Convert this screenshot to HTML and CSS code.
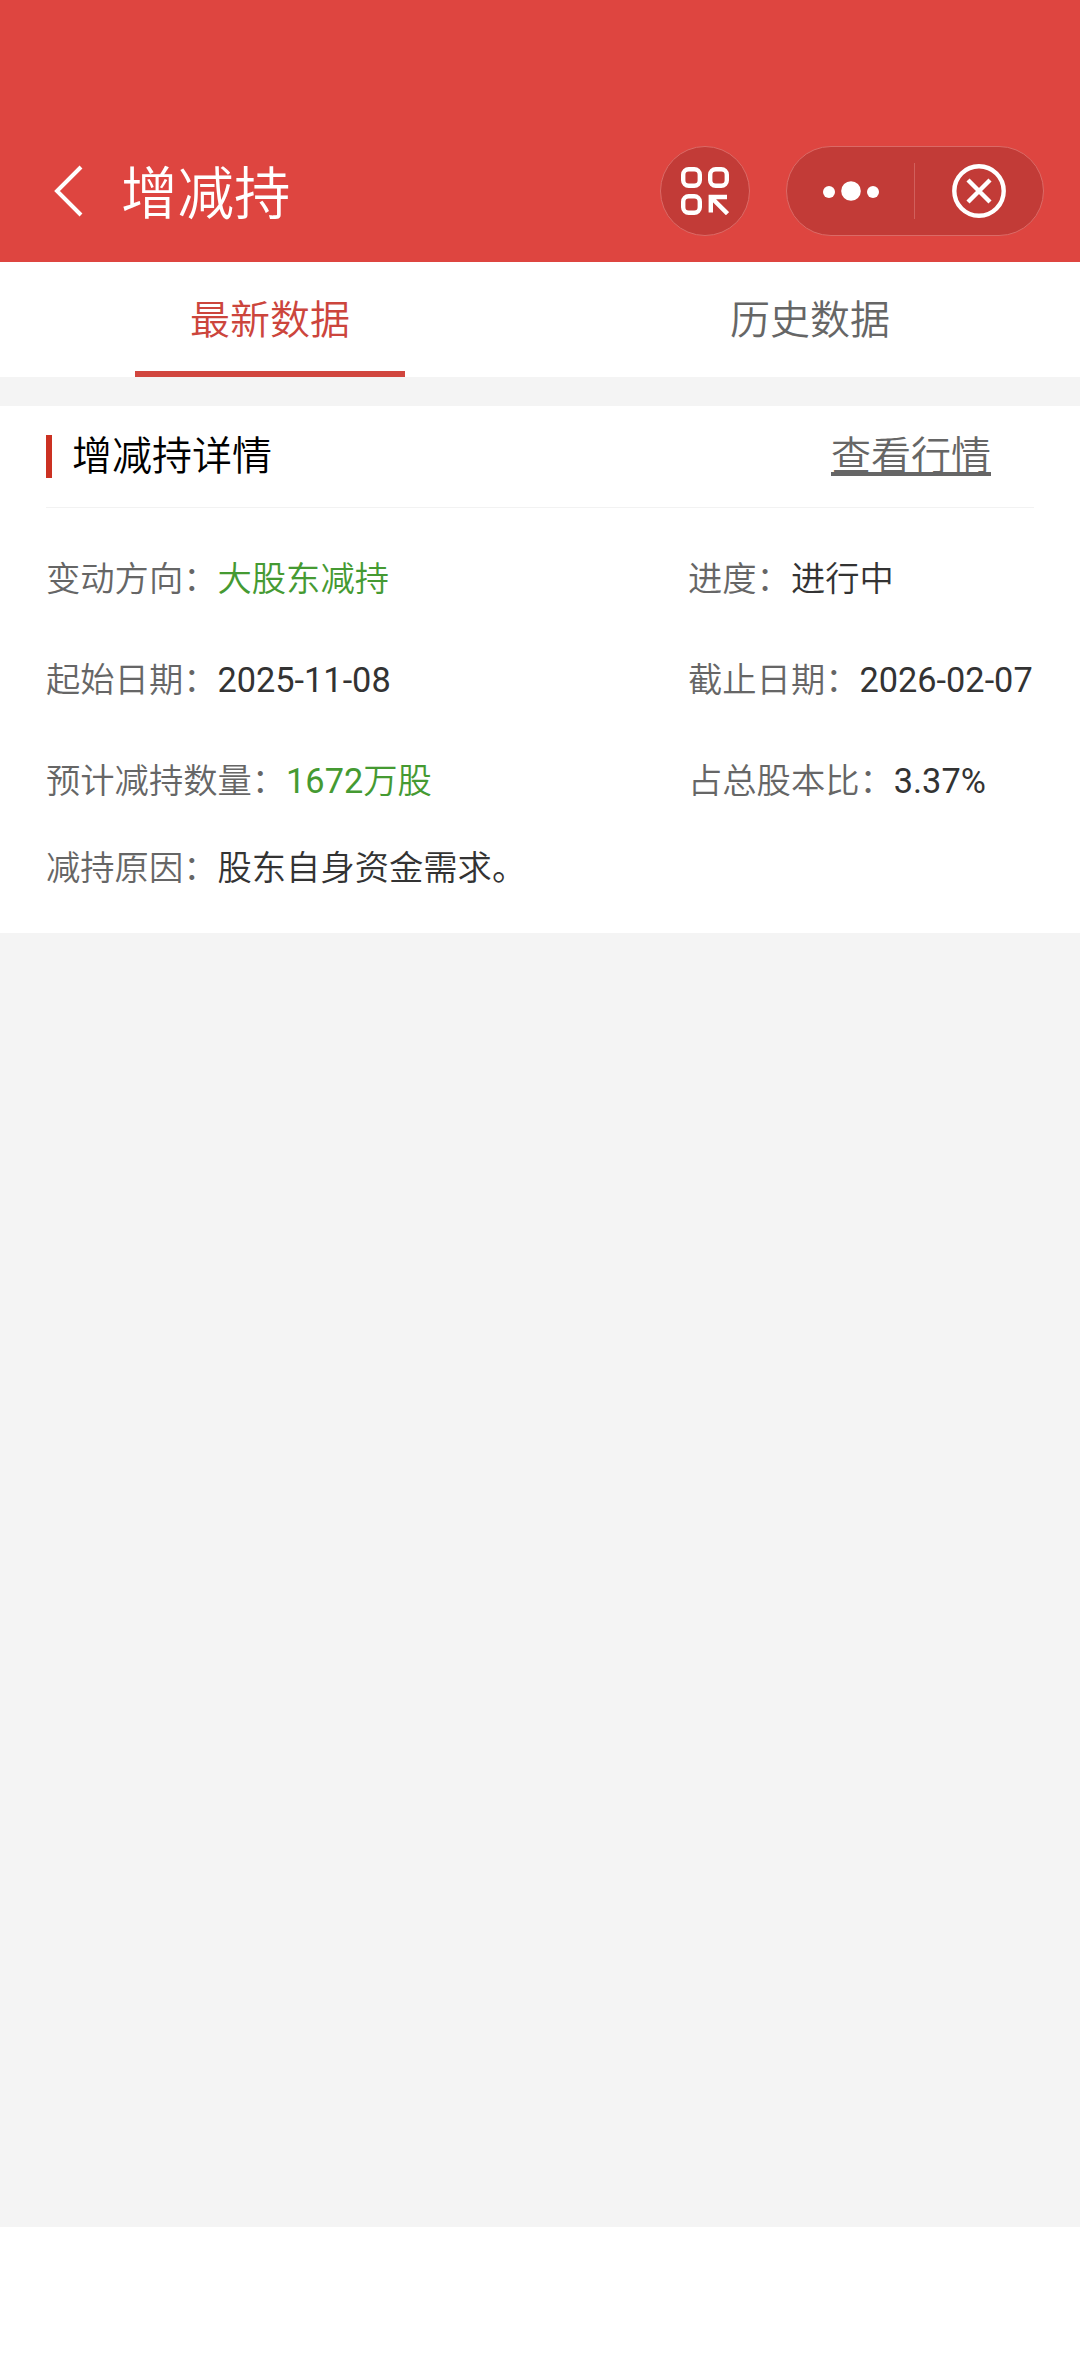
FILE: index.html
```html
<!DOCTYPE html>
<html lang="zh-CN">
<head>
<meta charset="utf-8">
<title>增减持</title>
<link rel="stylesheet" href="styles.css">
</head>
<body>
<header class="navbar">
  <svg class="back" width="30" height="56" viewBox="0 0 30 56" fill="none" stroke="#fff" stroke-width="4"><path d="M27 4 3 28l24 24"/></svg>
  <h1 class="title">增减持</h1>
  <div class="scan">
    <svg width="48" height="48" viewBox="0 0 48 48" fill="none" stroke="#fff" stroke-width="4.4"><rect x="2.2" y="2.2" width="16.6" height="16.6" rx="5.5"/><rect x="29.2" y="2.2" width="16.6" height="16.6" rx="5.5"/><rect x="2.2" y="29.2" width="16.6" height="16.6" rx="5.5"/><path d="M46 30H29.8v15.5M30 30.2 46.5 46.7"/></svg>
  </div>
  <div class="capsule">
    <svg class="more" width="56" height="20" viewBox="0 0 56 20" fill="#fff"><circle cx="6" cy="11" r="6"/><circle cx="28" cy="10" r="9.8"/><circle cx="50" cy="11" r="6"/></svg>
    <span class="divider"></span>
    <svg class="close" width="54" height="54" viewBox="0 0 54 54" fill="none" stroke="#fff" stroke-width="4.4"><circle cx="27" cy="27" r="24.7"/><path d="m16 16 22 22m0-22-22 22"/></svg>
  </div>
</header>
<nav class="tabs">
  <a class="tab active">最新数据</a>
  <a class="tab">历史数据</a>
</nav>
<main class="content">
  <section class="card">
    <div class="card-head">
      <h2 class="card-title">增减持详情</h2>
      <a class="quote-link">查看行情</a>
    </div>
    <div class="details">
      <div class="row"><p><span class="label">变动方向：</span><span class="green">大股东减持</span></p><p class="right"><span class="label">进度：</span>进行中</p></div>
      <div class="row"><p><span class="label">起始日期：</span><span class="num">2025-11-08</span></p><p class="right"><span class="label">截止日期：</span><span class="num">2026-02-07</span></p></div>
      <div class="row"><p><span class="label">预计减持数量：</span><span class="green"><span class="num">1672</span>万股</span></p><p class="right"><span class="label">占总股本比：</span><span class="num">3.37%</span></p></div>
      <div class="row reason"><p><span class="label">减持原因：</span>股东自身资金需求。</p></div>
    </div>
  </section>
</main>
</body>
</html>
```
FILE: styles.css
```css
* { box-sizing: border-box; }
body {
  margin: 0;
  min-height: 2376px;
  background: #fff;
  color: #333;
  font-family: Roboto, "Noto Sans CJK SC", sans-serif;
  font-weight: 350;
}
h1, h2, p { margin: 0; font-weight: inherit; }
svg { display: block; flex: none; }
.navbar {
  display: flex;
  align-items: center;
  height: 262px;
  padding: 120px 36px 0 54px;
  background: #de4540;
  color: #fff;
}
.title {
  flex: 1;
  margin-left: 37px;
  padding-top: 7px;
  font-size: 56.5px;
  line-height: 80px;
}
.scan, .capsule {
  display: flex;
  align-items: center;
  height: 90px;
  border: 1px solid #db6a66;
  border-radius: 45px;
  background: #c23b37;
}
.scan { width: 90px; justify-content: center; }
.capsule { width: 258px; margin-left: 36px; padding-left: 36px; }
.divider { width: 1px; height: 56px; margin: 0 37px 0 35px; background: #d1605c; }
.tabs { display: flex; height: 115px; background: #fff; }
.tab {
  display: flex;
  flex: 1;
  justify-content: center;
  font-size: 40px;
  line-height: 117px;
  color: #666;
}
.tab.active {
  color: #cc453c;
  background: linear-gradient(#d1463e, #d1463e) center bottom / 270px 6px no-repeat;
}
.content { height: 1850px; padding-top: 29px; background: #f4f4f4; }
.card { height: 527px; padding: 0 46px; background: #fff; }
.card-head {
  display: flex;
  justify-content: space-between;
  align-items: center;
  height: 102px;
  padding-right: 43px;
  border-bottom: 1px solid #f2f2f2;
  font-size: 40px;
  line-height: 43px;
}
.card-title {
  padding-left: 20px;
  border-left: 6px solid #cb3122;
  font-size: 40px;
  color: #000;
}
.quote-link {
  color: #666;
  text-decoration: underline;
  text-decoration-thickness: 4px;
  text-decoration-skip-ink: none;
  text-underline-offset: 2px;
}
.details { padding-top: 17px; font-size: 34.3px; }
.row { display: flex; height: 101px; align-items: center; white-space: nowrap; }
.row p { flex: 1; }
.row .right { flex: none; width: 346px; }
.reason { height: 73px; }
.label { color: #666; }
.num { font-weight: 400; }
.green { color: #459a32; }
```
